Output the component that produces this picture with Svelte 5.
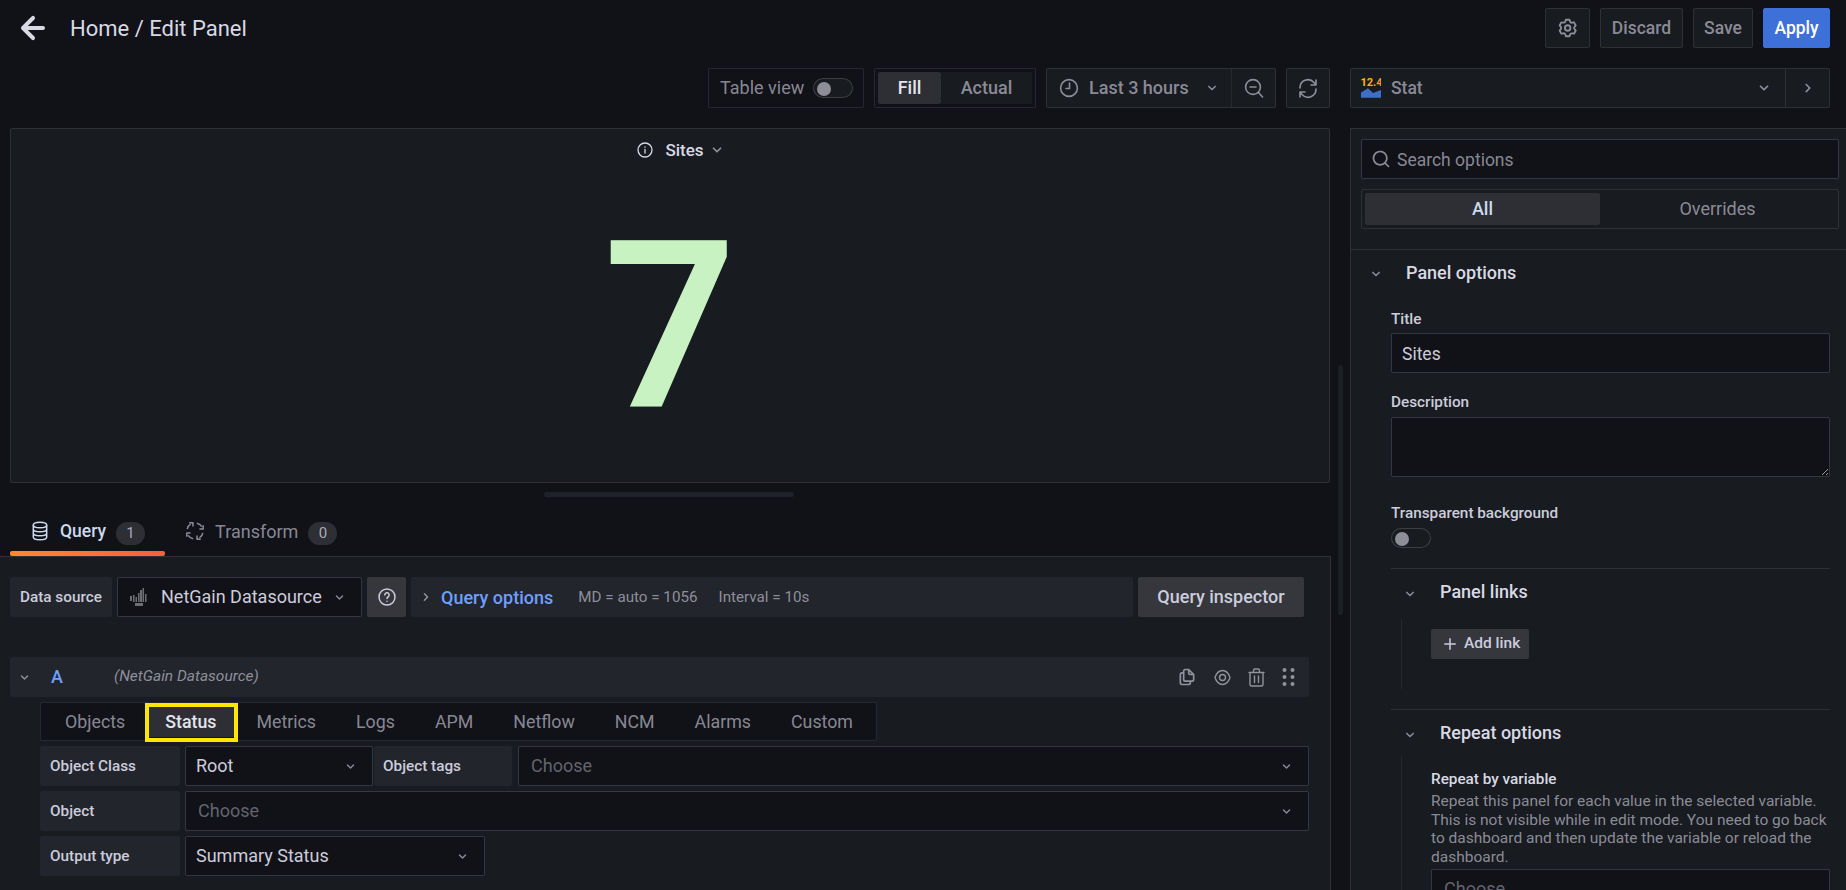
<script>
    const icons = {
        back: 'M17,11H9.41l3.3-3.29a1,1,0,1,0-1.42-1.42l-5,5a1,1,0,0,0-.21.33,1,1,0,0,0,0,.76,1,1,0,0,0,.21.33l5,5a1,1,0,0,0,1.42,0,1,1,0,0,0,0-1.42L9.41,13H17a1,1,0,0,0,0-2Z',
        down: 'M17,9.17a1,1,0,0,0-1.41,0L12,12.71,8.46,9.17a1,1,0,0,0-1.41,0,1,1,0,0,0,0,1.42l4.24,4.24a1,1,0,0,0,1.42,0L17,10.59A1,1,0,0,0,17,9.17Z',
        right: 'M14.83,11.29,10.59,7.05a1,1,0,0,0-1.42,0,1,1,0,0,0,0,1.41L12.71,12,9.17,15.54a1,1,0,0,0,0,1.41,1,1,0,0,0,.71.29,1,1,0,0,0,.71-.29l4.24-4.24A1,1,0,0,0,14.83,11.29Z',
        search: 'M21.71,20.29,18,16.61A9,9,0,1,0,16.61,18l3.68,3.68a1,1,0,0,0,1.42,0A1,1,0,0,0,21.71,20.29ZM11,18a7,7,0,1,1,7-7A7,7,0,0,1,11,18Z',
        cog: 'M19.9,12.66a1,1,0,0,1,0-1.32L21.18,9.9a1,1,0,0,0,.12-1.17l-2-3.46a1,1,0,0,0-1.07-.48l-1.88.38a1,1,0,0,1-1.15-.66l-.61-1.83A1,1,0,0,0,13.64,2h-4a1,1,0,0,0-1,.68L8.08,4.51a1,1,0,0,1-1.15.66L5,4.79A1,1,0,0,0,4,5.27L2,8.73A1,1,0,0,0,2.1,9.9l1.27,1.44a1,1,0,0,1,0,1.32L2.1,14.1A1,1,0,0,0,2,15.27l2,3.46a1,1,0,0,0,1.07.48l1.88-.38a1,1,0,0,1,1.15.66l.61,1.83a1,1,0,0,0,1,.68h4a1,1,0,0,0,.95-.68l.61-1.83a1,1,0,0,1,1.15-.66l1.88.38a1,1,0,0,0,1.07-.48l2-3.46a1,1,0,0,0-.12-1.17ZM18.41,14l.8.9-1.28,2.22-1.18-.24a3,3,0,0,0-3.45,2L12.92,20H10.36L10,18.86a3,3,0,0,0-3.45-2l-1.18.24L4.07,14.89l.8-.9a3,3,0,0,0,0-4l-.8-.9L5.35,6.89l1.18.24a3,3,0,0,0,3.45-2L10.36,4h2.56l.38,1.14a3,3,0,0,0,3.45,2l1.18-.24,1.28,2.22-.8.9A3,3,0,0,0,18.41,14ZM11.64,8a4,4,0,1,0,4,4A4,4,0,0,0,11.64,8Zm0,6a2,2,0,1,1,2-2A2,2,0,0,1,11.64,14Z',
        copy: 'M21,8.94a1.31,1.31,0,0,0-.06-.27l0-.09a1.07,1.07,0,0,0-.19-.28h0l-6-6h0a1.07,1.07,0,0,0-.28-.19.32.32,0,0,0-.09,0A.88.88,0,0,0,14.05,2H10A3,3,0,0,0,7,5V6H6A3,3,0,0,0,3,9V19a3,3,0,0,0,3,3h8a3,3,0,0,0,3-3V18h1a3,3,0,0,0,3-3V9S21,9,21,8.94ZM15,5.41,17.59,8H16a1,1,0,0,1-1-1ZM15,19a1,1,0,0,1-1,1H6a1,1,0,0,1-1-1V9A1,1,0,0,1,6,8H7v7a3,3,0,0,0,3,3h5Zm4-4a1,1,0,0,1-1,1H10a1,1,0,0,1-1-1V5a1,1,0,0,1,1-1h3V7a3,3,0,0,0,3,3h3Z',
        plus: 'M19,11H13V5a1,1,0,0,0-2,0v6H5a1,1,0,0,0,0,2h6v6a1,1,0,0,0,2,0V13h6a1,1,0,0,0,0-2Z'
    };

    const queryTabs = ['Objects', 'Status', 'Metrics', 'Logs', 'APM', 'Netflow', 'NCM', 'Alarms', 'Custom'];
</script>

{#snippet icon(name, size = 16)}
    <svg class="icon" width={size} height={size} viewBox="0 0 24 24" fill="currentColor"><path d={icons[name]} /></svg>
{/snippet}

<div class="page">
    <header class="topbar">
        <svg class="back" width="28" height="28" viewBox="5 5 14 14" fill="currentColor"><path d={icons.back} /></svg>
        <h1>Home / Edit Panel</h1>
        <div class="actions">
            <button class="btn square">{@render icon('cog', 22)}</button>
            <button class="btn discard">Discard</button>
            <button class="btn save">Save</button>
            <button class="btn apply">Apply</button>
        </div>
    </header>

    <div class="editor">
        <section class="left">
            <div class="toolbar">
                <div class="box table-view">
                    <span class="tool-text">Table view</span>
                    <span class="switch"><i></i></span>
                </div>
                <div class="box fill-group">
                    <span class="seg active">Fill</span>
                    <span class="seg">Actual</span>
                </div>
                <div class="box time">
                    <div class="time-range">
                        <svg class="icon" width="20" height="20" viewBox="0 0 20 20" fill="none" stroke="currentColor" stroke-width="1.6" stroke-linecap="round"><circle cx="10" cy="10" r="8.4" /><path d="M10.5 5v5.5H7" /></svg>
                        <span class="time-text tool-text">Last 3 hours</span>
                        {@render icon('down', 18)}
                    </div>
                    <div class="zoom-out">
                        <svg class="icon" width="20" height="20" viewBox="0 0 20 20" fill="none" stroke="currentColor" stroke-width="1.6" stroke-linecap="round"><circle cx="9" cy="9" r="7.4" /><path d="M6 9h6M14.5 14.5 18.5 19" /></svg>
                    </div>
                </div>
                <div class="box refresh">
                    <svg class="icon" width="20" height="24" viewBox="0 0 20 24" fill="none" stroke="currentColor" stroke-width="1.6" stroke-linecap="round" stroke-linejoin="round"><path d="M2 11a8 8 0 0 1 14-5.5L18 8M18 3v5h-5" transform="translate(0 1)" /><path d="M18 13a8 8 0 0 1-14 5.500L2 16M2 21v-5h5" /></svg>
                </div>
            </div>

            <div class="panel">
                <div class="panel-title">
                    <svg class="icon" width="16" height="16" viewBox="0 0 16 16" fill="none" stroke="currentColor" stroke-width="1.3" stroke-linecap="round"><circle cx="8" cy="8" r="7" /><path d="M8 7.500v3.500M8 5v.2" /></svg>
                    <span>Sites</span>
                    {@render icon('down', 20)}
                </div>
                <div class="stat">7</div>
            </div>

            <div class="handle"><span></span></div>

            <div class="pane-tabs">
                <div class="pane-tab current">
                    <svg class="icon" width="20" height="20" viewBox="0 0 20 20" fill="none" stroke="currentColor" stroke-width="1.5"><ellipse cx="10" cy="4" rx="6.700" ry="2.800" /><path d="M3.300 4v12c0 1.600 3 2.800 6.700 2.800s6.700-1.200 6.700-2.800V4M3.300 8c0 1.600 3 2.800 6.700 2.800S16.700 9.600 16.700 8M3.300 12c0 1.600 3 2.800 6.700 2.800s6.700-1.200 6.700-2.800" /></svg>
                    <span>Query</span>
                    <b>1</b>
                </div>
                <div class="pane-tab">
                    <svg class="icon" width="20" height="20" viewBox="0 0 20 20" fill="none" stroke="currentColor" stroke-width="1.500" stroke-linejoin="round">
                        {#each [0, 90, 180, 270] as turn}
                            <path d="M2.200 8.200C2.500 6 3.600 4.400 5.600 3.200M4.200 1.800H8V5.600" transform="rotate({turn} 10 10)" />
                        {/each}
                    </svg>
                    <span>Transform</span>
                    <b>0</b>
                </div>
            </div>

            <div class="query-pane">
                <div class="ds-row">
                    <span class="label ds-label">Data source</span>
                    <div class="select ds-select">
                        <svg class="ng-logo" width="18" height="18" viewBox="0 0 18 18" fill="#6d6e74"><path d="M0 8h2v5H0zM3 7h1.500v7H3zM5.500 9H7v5H5.500zM8 5h1.500v9H8zM10 2h2v12h-2zM12.500 0h1.500v14h-1.500zM15 6h1.500v8H15zM5 15h8v3H5z" /></svg>
                        <span class="ds-name">NetGain Datasource</span>
                        {@render icon('down', 17)}
                    </div>
                    <div class="help">
                        <svg class="icon" width="18" height="18" viewBox="0 0 18 18" fill="none" stroke="currentColor" stroke-width="1.500" stroke-linecap="round"><circle cx="9" cy="9" r="8" /><path d="M6.800 7a2.200 2.200 0 1 1 3.200 2c-.7.400-1 .8-1 1.500M9 13.200v.1" /></svg>
                    </div>
                    <div class="options">
                        {@render icon('right', 18)}
                        <span class="options-link">Query options</span>
                        <span class="meta md">MD = auto = 1056</span>
                        <span class="meta">Interval = 10s</span>
                    </div>
                    <button class="inspector">Query inspector</button>
                </div>

                <div class="query-head">
                    {@render icon('down', 17)}
                    <span class="ref">A</span>
                    <em>(NetGain Datasource)</em>
                    <div class="head-icons">
                        {@render icon('copy', 20)}
                        <svg class="icon" width="17" height="17" viewBox="0 0 17 17" fill="none" stroke="currentColor" stroke-width="1.400"><path d="M1 8.500C2.500 4 5.500 1.500 8.500 1.500S14.500 4 16 8.500c-1.500 4.500-4.500 7-7.500 7S2.500 13 1 8.500Z" /><circle cx="8.500" cy="8.500" r="3" /></svg>
                        <svg class="icon" width="17" height="19" viewBox="0 0 17 19" fill="none" stroke="currentColor" stroke-width="1.400" stroke-linecap="round"><path d="M2 5v11.500A1.500 1.500 0 0 0 3.500 18h10a1.500 1.500 0 0 0 1.500-1.500V5M1 4.500h15M5.500 4V2.500A1.500 1.500 0 0 1 7 1h3a1.500 1.500 0 0 1 1.500 1.500V4M6.500 8v6.500M10.500 8v6.500" /></svg>
                        <svg class="icon" width="13" height="20" viewBox="0 0 13 20" fill="currentColor"><circle cx="2.500" cy="3" r="2" /><circle cx="10.500" cy="3" r="2" /><circle cx="2.500" cy="10" r="2" /><circle cx="10.500" cy="10" r="2" /><circle cx="2.500" cy="17" r="2" /><circle cx="10.500" cy="17" r="2" /></svg>
                    </div>
                </div>

                <div class="editor-body">
                    <div class="q-tabs">
                        {#each queryTabs as tab}
                            <span class="q-tab" class:selected={tab === 'Status'}>
                                {tab}
                                {#if tab === 'Status'}<i class="mark"></i>{/if}
                            </span>
                        {/each}
                    </div>
                    <div class="field-row">
                        <span class="label wide">Object Class</span>
                        <div class="select class-select"><span class="val">Root</span>{@render icon('down', 17)}</div>
                        <span class="label tags">Object tags</span>
                        <div class="select grow"><span class="ph tag-ph">Choose</span>{@render icon('down', 17)}</div>
                    </div>
                    <div class="field-row">
                        <span class="label wide">Object</span>
                        <div class="select grow obj"><span class="ph">Choose</span>{@render icon('down', 17)}</div>
                    </div>
                    <div class="field-row">
                        <span class="label wide">Output type</span>
                        <div class="select output"><span class="val">Summary Status</span>{@render icon('down', 17)}</div>
                    </div>
                </div>
            </div>
            <i class="scroll"></i>
        </section>

        <aside class="right">
            <div class="viz-picker">
                <svg width="20" height="20" viewBox="0 0 20 20">
                    <defs>
                        <linearGradient id="num" x1="0" y1="0" x2="1" y2="0"><stop offset="0" stop-color="#ffc400" /><stop offset="1" stop-color="#f98b3a" /></linearGradient>
                    </defs>
                    <text x="-0.500" y="8.300" font-family="Roboto, sans-serif" font-weight="700" font-size="11" fill="url(#num)">12.4</text>
                    <path d="M0 14.500 7 10.300 12 15 20 12V19.700H0Z" fill="#3d6fc4" />
                </svg>
                <span class="viz-name">Stat</span>
                {@render icon('down', 20)}
                <span class="viz-toggle">{@render icon('right', 20)}</span>
            </div>

            <div class="options-pane">
                <div class="opt-top">
                    <div class="search">
                        {@render icon('search', 20)}
                        <input placeholder="Search options" />
                    </div>
                    <div class="box all-tabs">
                        <span class="seg active">All</span>
                        <span class="seg">Overrides</span>
                    </div>
                </div>

                <div class="group">
                    <div class="group-head">
                        {@render icon('down', 18)}
                        <span>Panel options</span>
                    </div>
                    <div class="group-body">
                        <label class="f-label" for="title">Title</label>
                        <input id="title" class="text-input" value="Sites" />
                        <label class="f-label desc" for="desc">Description</label>
                        <textarea id="desc"></textarea>
                        <span class="f-label trans">Transparent background</span>
                        <span class="switch"><i></i></span>

                        <div class="sub first">
                            <div class="sub-head">
                                {@render icon('down', 18)}
                                <span>Panel links</span>
                            </div>
                            <div class="sub-body links">
                                <button class="add-link">{@render icon('plus', 18)}<span>Add link</span></button>
                            </div>
                        </div>

                        <div class="sub">
                            <div class="sub-head">
                                {@render icon('down', 18)}
                                <span>Repeat options</span>
                            </div>
                            <div class="sub-body">
                                <div class="repeat-label">Repeat by variable</div>
                                <p>Repeat this panel for each value in the selected variable. This is not visible while in edit mode. You need to go back to dashboard and then update the variable or reload the dashboard.</p>
                                <div class="select repeat"><span class="ph">Choose</span></div>
                            </div>
                        </div>
                    </div>
                </div>
            </div>
        </aside>
    </div>
</div>

<style>
    :global(body) {
        background: #111217;
    }

    .page {
        width: 1846px;
        height: 890px;
        overflow: hidden;
        background: #111217;
        color: #ccccdc;
        font-family: Roboto, "Liberation Sans", sans-serif;
        font-size: 18px;
    }

    .icon {
        flex: none;
        display: block;
    }

    button {
        font-family: inherit;
    }

    /* top bar */
    .topbar {
        height: 56px;
        box-sizing: border-box;
        padding: 8px 16px 0 19px;
        display: flex;
        align-items: flex-start;
    }

    .back {
        margin-top: 6px;
        color: #d8d9e4;
    }

    h1 {
        margin: 1px 0 0 23px;
        font-size: 22px;
        font-weight: 400;
        line-height: 40px;
        color: #d8d9e4;
    }

    .actions {
        margin-left: auto;
        display: flex;
        gap: 10px;
    }

    .btn {
        height: 40px;
        box-sizing: border-box;
        padding: 0;
        border: 1px solid rgba(204, 204, 220, 0.12);
        border-radius: 2px;
        background: #181b1f;
        color: rgba(204, 204, 220, 0.65);
        font-size: 17.500px;
        font-weight: 500;
    }

    .square {
        width: 45px;
        display: flex;
        align-items: center;
        justify-content: center;
    }

    .discard {
        width: 83px;
    }

    .save {
        width: 60px;
    }

    .apply {
        width: 67px;
        background: #3d71d9;
        border-color: #3d71d9;
        color: #fff;
    }

    /* main split */
    .editor {
        display: flex;
        height: 834px;
    }

    .left {
        position: relative;
        width: 1331px;
        flex: none;
        display: flex;
        flex-direction: column;
    }

    .toolbar {
        height: 40px;
        margin-top: 12px;
        padding-right: 1px;
        display: flex;
        justify-content: flex-end;
        gap: 10px;
        color: rgba(204, 204, 220, 0.65);
    }

    .tool-text {
        padding-bottom: 2px;
    }

    .box {
        box-sizing: border-box;
        border: 1px solid rgba(204, 204, 220, 0.12);
        border-radius: 2px;
        display: flex;
        align-items: center;
    }

    .table-view {
        width: 156px;
        padding-left: 11px;
        gap: 9px;
        background: #111217;
    }

    .switch {
        display: block;
        width: 40px;
        height: 20px;
        box-sizing: border-box;
        padding: 3px;
        border: 1px solid rgba(204, 204, 220, 0.2);
        border-radius: 10px;
        background: #181b1f;
    }

    .switch i {
        display: block;
        width: 14px;
        height: 14px;
        border-radius: 50%;
        background: #8e8e99;
    }

    .fill-group {
        width: 162px;
        padding: 3px;
        background: #111217;
    }

    .fill-group .seg {
        height: 32px;
        line-height: 32px;
        text-align: center;
        background: #181b1f;
        font-weight: 500;
    }

    .fill-group .seg:first-child {
        width: 63px;
    }

    .fill-group .seg:last-child {
        flex: 1;
        font-weight: 500;
    }

    .seg {
        display: block;
    }

    .seg.active {
        background: #2d2f34 !important;
        color: #e4e5ee;
        border-radius: 2px;
    }

    .time {
        width: 230px;
        background: #181b1f;
    }

    .time-range {
        width: 185px;
        height: 100%;
        box-sizing: border-box;
        padding-left: 12px;
        border-right: 1px solid rgba(204, 204, 220, 0.08);
        display: flex;
        align-items: center;
        flex: none;
    }

    .time-text {
        margin-left: 10px;
        margin-right: 14px;
        font-weight: 500;
        white-space: nowrap;
    }

    .zoom-out,
    .refresh {
        flex: 1;
        display: flex;
        align-items: center;
        justify-content: center;
    }

    .refresh {
        flex: none;
        width: 44px;
        background: #181b1f;
    }

    /* viz panel */
    .panel {
        margin: 20px 0 0 10px;
        width: 1320px;
        height: 355px;
        box-sizing: border-box;
        flex: none;
        background: #181b1f;
        border: 1px solid rgba(204, 204, 220, 0.12);
        border-radius: 2px;
    }

    .panel-title {
        height: 42px;
        padding-left: 24px;
        display: flex;
        align-items: center;
        justify-content: center;
        gap: 12px;
        font-size: 17px;
        font-weight: 500;
        color: #d8d9e4;
    }

    .panel-title .icon:last-child {
        margin-left: -9px;
        color: rgba(204, 204, 220, 0.65);
    }

    .stat {
        height: 310px;
        display: flex;
        align-items: center;
        justify-content: center;
        padding-top: 2px;
        box-sizing: border-box;
        font-size: 233px;
        font-weight: 600;
        line-height: 1;
        color: #c8f2c2;
    }

    .handle {
        height: 23px;
        padding: 9px 0 0 7px;
        box-sizing: border-box;
        flex: none;
        display: flex;
        justify-content: center;
    }

    .handle span {
        width: 250px;
        height: 5px;
        border-radius: 3px;
        background: #1f2228;
    }

    /* query / transform tabs */
    .pane-tabs {
        height: 50px;
        flex: none;
        padding-left: 10px;
        display: flex;
    }

    .pane-tab {
        height: 50px;
        box-sizing: border-box;
        padding: 0 20px;
        display: flex;
        align-items: center;
        gap: 10px;
        color: rgba(204, 204, 220, 0.65);
        position: relative;
    }

    .pane-tab span {
        font-weight: 400;
    }

    .pane-tab.current {
        color: #ccd9ee;
    }

    .pane-tab.current span {
        font-size: 17.500px;
        font-weight: 500;
    }

    .pane-tab.current::after {
        content: "";
        position: absolute;
        left: 0;
        right: 0;
        bottom: 0;
        height: 5px;
        border-radius: 2px;
        background: linear-gradient(270deg, #f55f3e, #ff8833);
    }

    .pane-tab b {
        width: 29px;
        height: 23px;
        margin-top: 4px;
        border-radius: 12px;
        background: #2d2f34;
        color: rgba(204, 204, 220, 0.8);
        font-size: 15px;
        font-weight: 400;
        line-height: 23px;
        text-align: center;
    }

    .query-pane {
        flex: 1;
        box-sizing: border-box;
        padding: 20px 21px 0 10px;
        background: #181b1f;
        border-top: 1px solid rgba(204, 204, 220, 0.12);
        border-right: 1px solid rgba(204, 204, 220, 0.12);
    }

    .scroll {
        position: absolute;
        left: 1338px;
        top: 309px;
        width: 5px;
        height: 250px;
        border-radius: 3px;
        background: #1c1f24;
    }

    .ds-row {
        height: 40px;
        display: flex;
    }

    .label {
        flex: none;
        height: 40px;
        display: flex;
        align-items: center;
        box-sizing: border-box;
        padding-left: 10px;
        border-radius: 2px;
        background: #22252b;
        font-size: 15.300px;
        font-weight: 500;
    }

    .ds-label {
        width: 102px;
    }

    .select {
        height: 40px;
        box-sizing: border-box;
        border: 1px solid rgba(204, 204, 220, 0.2);
        border-radius: 2px;
        background: #111217;
        display: flex;
        align-items: center;
    }

    .select .icon {
        margin-left: auto;
        margin-right: 13px;
        color: rgba(204, 204, 220, 0.65);
    }

    .ds-select {
        width: 245px;
        margin-left: 5px;
        padding-left: 12px;
    }

    .ds-name {
        margin-left: 13px;
        padding-bottom: 2px;
        font-weight: 400;
        white-space: nowrap;
    }

    .ng-logo {
        flex: none;
    }

    .help {
        width: 39px;
        margin-left: 5px;
        flex: none;
        border-radius: 2px;
        background: #35373c;
        display: flex;
        align-items: center;
        justify-content: center;
        color: #ccccdc;
    }

    .options {
        width: 722px;
        margin-left: 5px;
        flex: none;
        box-sizing: border-box;
        padding-left: 6px;
        border-radius: 2px;
        background: #22252b;
        display: flex;
        align-items: center;
        color: rgba(204, 204, 220, 0.65);
    }

    .options-link {
        margin-left: 6px;
        color: #6e9fff;
        font-weight: 500;
    }

    .meta {
        margin-left: 21px;
        font-size: 15.200px;
    }

    .md {
        margin-left: 25px;
    }

    .inspector {
        width: 166px;
        margin-left: 5px;
        border: 0;
        padding: 0 0 2px;
        border-radius: 2px;
        background: #35373c;
        color: #ccccdc;
        font-size: 18px;
        font-weight: 500;
    }

    .query-head {
        height: 40px;
        margin-top: 40px;
        box-sizing: border-box;
        padding: 0 14px 0 6px;
        border-radius: 2px;
        background: #22252b;
        display: flex;
        align-items: center;
        color: rgba(204, 204, 220, 0.65);
    }

    .ref {
        width: 63px;
        margin-left: 18px;
        padding-bottom: 2px;
        color: #6e9fff;
        font-weight: 500;
    }

    em {
        padding-bottom: 2px;
        font-size: 15.500px;
    }

    .head-icons {
        margin-left: auto;
        display: flex;
        align-items: center;
        gap: 17px;
    }

    /* query editor form */
    .editor-body {
        margin-left: 30px;
    }

    .q-tabs {
        width: 837px;
        height: 39px;
        margin-top: 5px;
        box-sizing: border-box;
        padding: 3px 4px;
        border: 1px solid rgba(204, 204, 220, 0.12);
        border-radius: 2px;
        background: #111217;
        display: flex;
    }

    .q-tab {
        position: relative;
        padding: 0 20px;
        font-size: 17.800px;
        line-height: 31px;
        color: rgba(204, 204, 220, 0.65);
    }

    .q-tab.selected {
        background: #2d2f34;
        color: #e4e5ee;
        font-weight: 500;
    }

    .mark {
        position: absolute;
        left: 0;
        right: -2px;
        top: -3px;
        bottom: -5px;
        border: 4px solid #ffe600;
    }

    .field-row {
        display: flex;
        margin-top: 5px;
    }

    .wide {
        width: 140px;
    }

    .field-row .select {
        margin-left: 5px;
    }

    .class-select {
        width: 188px;
    }

    .tags {
        width: 138px;
        margin-left: 1px;
        padding-left: 9px;
    }

    .grow {
        flex: 1;
    }

    .field-row .tags + .grow {
        margin-left: 6px;
    }

    .val {
        margin-left: 10px;
        padding-bottom: 2px;
    }

    .ph {
        margin-left: 12px;
        padding-bottom: 2px;
        color: rgba(204, 204, 220, 0.45);
    }

    .output {
        width: 300px;
    }

    /* right column */
    .right {
        flex: 1;
        margin-left: 19px;
        min-width: 0;
    }

    .viz-picker {
        width: 480px;
        height: 40px;
        margin-top: 12px;
        box-sizing: border-box;
        padding-left: 10px;
        border: 1px solid rgba(204, 204, 220, 0.12);
        border-radius: 2px;
        background: #181b1f;
        display: flex;
        align-items: center;
        color: rgba(204, 204, 220, 0.65);
    }

    .viz-name {
        margin-left: 10px;
        font-size: 17.500px;
        font-weight: 500;
    }

    .viz-picker > .icon {
        margin-left: auto;
        margin-right: 11px;
    }

    .viz-toggle {
        width: 43px;
        height: 100%;
        border-left: 1px solid rgba(204, 204, 220, 0.12);
        display: flex;
        align-items: center;
        justify-content: center;
    }

    .options-pane {
        margin-top: 20px;
        height: 782px;
        box-sizing: border-box;
        background: #181b1f;
        border-left: 1px solid rgba(204, 204, 220, 0.12);
        border-top: 1px solid rgba(204, 204, 220, 0.12);
    }

    .opt-top {
        padding: 10px 7px 20px 10px;
        border-bottom: 1px solid rgba(204, 204, 220, 0.12);
    }

    .search {
        height: 40px;
        box-sizing: border-box;
        padding-left: 9px;
        border: 1px solid rgba(204, 204, 220, 0.2);
        border-radius: 2px;
        background: #111217;
        display: flex;
        align-items: center;
        color: rgba(204, 204, 220, 0.65);
    }

    input,
    textarea {
        font-family: inherit;
        font-size: 17.500px;
        color: #ccccdc;
        outline: none;
    }

    .search input {
        flex: 1;
        margin-left: 6px;
        border: 0;
        padding: 2px 0 0;
        background: none;
    }

    .search input::placeholder {
        color: rgba(204, 204, 220, 0.65);
    }

    .all-tabs {
        height: 40px;
        margin-top: 10px;
        padding: 3px;
    }

    .all-tabs .seg {
        flex: 1;
        height: 32px;
        line-height: 32px;
        text-align: center;
        color: rgba(204, 204, 220, 0.65);
    }

    .all-tabs .seg.active {
        flex: none;
        width: 235px;
        font-weight: 500;
        color: #ccd9ee;
    }

    .group-head {
        height: 45px;
        padding-left: 16px;
        display: flex;
        align-items: center;
        color: #d8d9e4;
    }

    .group-head .icon,
    .sub-head .icon {
        color: rgba(204, 204, 220, 0.65);
        margin-top: 3px;
    }

    .group-head span {
        margin-left: 21px;
        font-size: 18px;
        font-weight: 500;
    }

    .group-body {
        margin: 0 16px 0 40px;
    }

    .f-label {
        display: block;
        font-size: 15.300px;
        font-weight: 500;
        line-height: 20px;
        margin-top: 14px;
        margin-bottom: 4px;
    }

    .desc {
        margin-top: 19px;
        margin-bottom: 5px;
    }

    .trans {
        margin-top: 26px;
        margin-bottom: 5px;
    }

    .text-input {
        display: block;
        width: 100%;
        height: 40px;
        box-sizing: border-box;
        padding: 2px 10px 0;
        border: 1px solid rgba(204, 204, 220, 0.2);
        border-radius: 2px;
        background: #111217;
    }

    textarea {
        display: block;
        width: 100%;
        height: 60px;
        box-sizing: border-box;
        margin: 0;
        border: 1px solid rgba(204, 204, 220, 0.2);
        border-radius: 2px;
        background: #111217;
    }

    .sub {
        border-top: 1px solid rgba(204, 204, 220, 0.12);
    }

    .first {
        margin-top: 20px;
    }

    .sub-head {
        height: 46px;
        padding-left: 10px;
        display: flex;
        align-items: center;
        color: #d8d9e4;
    }

    .sub-head span {
        margin-left: 21px;
        padding-bottom: 2px;
        font-size: 18px;
        font-weight: 500;
    }

    .sub-body {
        margin: 0 0 0 10px;
        padding-left: 29px;
        border-left: 1px solid rgba(204, 204, 220, 0.08);
    }

    .links {
        margin-top: 4px;
        margin-bottom: 20px;
        padding-top: 10px;
        padding-bottom: 30px;
    }

    .add-link {
        width: 98px;
        height: 30px;
        padding: 0 0 0 10px;
        border: 0;
        border-radius: 2px;
        background: #35373c;
        color: #ccccdc;
        display: flex;
        align-items: center;
        gap: 5px;
        font-size: 15.500px;
        font-weight: 500;
        white-space: nowrap;
    }

    .add-link span {
        padding-bottom: 2px;
    }

    .repeat-label {
        padding-top: 13px;
        font-size: 15.300px;
        font-weight: 500;
        line-height: 20px;
        color: #d8d9e4;
    }

    .sub-body p {
        margin: 3px 0 3px;
        font-size: 15.500px;
        line-height: 18.600px;
        color: rgba(204, 204, 220, 0.65);
    }
</style>
